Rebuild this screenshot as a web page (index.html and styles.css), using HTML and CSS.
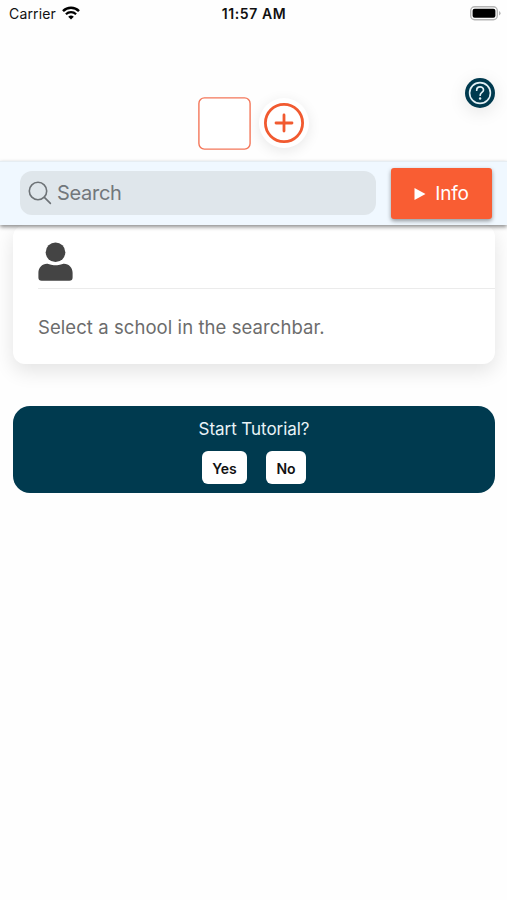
FILE: index.html
```
<!DOCTYPE html>
<html lang="en">
<head>
    <meta charset="UTF-8">
    <meta name="viewport" content="width=device-width, initial-scale=1.0">
    <title>School Search</title>
    <link rel="stylesheet" href="styles.css">
</head>
<body>
    <div class="status-bar">
        <div class="carrier">
            <span>Carrier</span>
            <svg class="wifi" width="18" height="14" viewBox="0 0 18 14">
                <path d="M1 5.1a11.500 11.500 0 0 1 16 0" fill="none" stroke="#000" stroke-width="2.5"/>
                <path d="M3.900 8.200a7.300 7.300 0 0 1 10.200 0" fill="none" stroke="#000" stroke-width="2.2"/>
                <path d="M9 13.600L6.200 10.800a4 4 0 0 1 5.600 0z" fill="#000"/>
            </svg>
        </div>
        <div class="time">11:57 AM</div>
        <svg class="battery" width="31" height="15" viewBox="0 0 31 15">
            <rect x="0.7" y="0.7" width="26.6" height="13" rx="4" fill="#fff" stroke="#b5b5b5" stroke-width="1.4"/>
            <rect x="2.6" y="2.7" width="22.8" height="9" rx="2" fill="#000"/>
            <path d="M29 5v4.6q1.6-.8 1.6-2.3T29 5z" fill="#b5b5b5"/>
        </svg>
    </div>

    <header class="header">
        <svg class="tab" width="53" height="53" viewBox="0 0 53 53">
            <rect x="0.9" y="0.9" width="51.2" height="51.2" rx="5.5" fill="#fff" stroke="#f4775a" stroke-width="1.4"/>
        </svg>
        <button class="add-btn" aria-label="Add">
            <svg width="40" height="40" viewBox="0 0 40 40" fill="none" stroke="#f15a30">
                <circle cx="20" cy="20" r="18.6" stroke-width="2.8"/>
                <path d="M20 12v16M12 20h16" stroke-width="2.8" stroke-linecap="round"/>
            </svg>
        </button>
        <button class="help-btn" aria-label="Help">
            <svg width="30" height="30" viewBox="0 0 30 30" fill="none" stroke="#e4f1f6">
                <circle cx="15" cy="15" r="15" fill="#003a4f" stroke="none"/>
                <circle cx="15" cy="15" r="10.4" stroke-width="1.6"/>
                <path d="M11.700 12.200c0-4.500 6.800-4.300 6.800-.300 0 2.500-3.300 2.600-3.300 5.300" stroke-width="1.7" stroke-linecap="round"/>
                <circle cx="15.1" cy="20.5" r="1.2" fill="#e4f1f6" stroke="none"/>
            </svg>
        </button>
    </header>

    <section class="toolbar">
        <div class="search">
            <svg width="24" height="24" viewBox="0 0 24 24" fill="none" stroke="#6d7276" stroke-width="1.6" stroke-linecap="round">
                <circle cx="10" cy="10" r="8.7"/>
                <path d="M16.4 16.4l6 6"/>
            </svg>
            <span>Search</span>
        </div>
        <button class="info-btn">
            <svg width="12" height="12" viewBox="0 0 12 12"><path d="M.5 0L11.5 6 .5 12z" fill="#fff"/></svg>
            <span>Info</span>
        </button>
    </section>

    <section class="card">
        <div class="card-header">
            <svg width="35" height="40" viewBox="0 0 35 40" fill="#444">
                <circle cx="17.5" cy="10.2" r="9.8"/>
                <path d="M9 21.8c1.8 0 3.7 1.5 8.500 1.500s6.700-1.500 8.500-1.500c5 0 8.600 4 8.600 9v4.700q0 3.300-3.300 3.300H3.700Q.4 38.800 .4 35.500v-4.700c0-5 3.600-9 8.600-9z"/>
            </svg>
        </div>
        <p class="card-text">Select a school in the searchbar.</p>
    </section>

    <section class="tutorial">
        <p class="tutorial-title">Start Tutorial?</p>
        <div class="tutorial-buttons">
            <button class="yes-btn">Yes</button>
            <button class="no-btn">No</button>
        </div>
    </section>
</body>
</html>
```

FILE: styles.css
```
body {
    font-family: Inter, "Liberation Sans", sans-serif;
    margin: 0;
    background-color: #fefefe;
    overflow: hidden;
}
button {
    font-family: inherit;
    border: none;
    padding: 0;
    box-sizing: border-box;
}
svg {
    display: block;
    flex: none;
}
.status-bar {
    display: grid;
    grid-template-columns: 1fr auto 1fr;
    align-items: center;
    height: 27px;
    padding: 0 6px 0 9px;
    font-size: 14px;
    color: #111;
}
.carrier {
    display: flex;
    align-items: center;
    gap: 6px;
    letter-spacing: 0.15px;
}
.wifi {
    margin-top: -2px;
}
.time {
    margin-right: 2px;
    font-weight: 600;
    letter-spacing: 0.6px;
}
.battery {
    justify-self: end;
}
.header {
    position: relative;
    display: flex;
    justify-content: center;
    align-items: flex-start;
    gap: 8px;
    height: 134px;
    padding-top: 70px;
    box-sizing: border-box;
}
.add-btn {
    width: 50px;
    height: 50px;
    margin-top: 1px;
    padding: 5px;
    border-radius: 50%;
    background-color: #fff;
    box-shadow: 0 3px 14px rgba(0, 0, 0, 0.09);
}
.help-btn {
    position: absolute;
    top: 51px;
    right: 12px;
    width: 30px;
    height: 30px;
    border-radius: 50%;
    background-color: #fff;
    box-shadow: 0 4px 18px rgba(0, 0, 0, 0.1);
}
.toolbar {
    position: relative;
    z-index: 1;
    display: flex;
    align-items: center;
    gap: 15px;
    height: 64px;
    padding: 0 15px 0 20px;
    box-sizing: border-box;
    background-color: #f0f8ff;
    border-top: 1px solid #e6edf2;
    box-shadow: 0 2px 4px rgba(0, 0, 0, 0.45);
}
.search {
    flex: 1;
    display: flex;
    align-items: center;
    gap: 5px;
    height: 44px;
    margin-bottom: 2px;
    padding-left: 8px;
    border-radius: 12px;
    background-color: #dfe6eb;
    color: #72777b;
    font-size: 20px;
    letter-spacing: -0.3px;
}
.info-btn {
    display: flex;
    align-items: center;
    justify-content: center;
    gap: 9px;
    width: 101px;
    height: 51px;
    border-radius: 3px;
    background-color: #f95d33;
    color: #fff;
    font-size: 19px;
    letter-spacing: -0.2px;
    box-shadow: 0 2px 4px rgba(0, 0, 0, 0.4);
}
.card {
    height: 139px;
    margin: 0 12px 0 13px;
    padding-left: 25px;
    border-radius: 12px;
    background-color: #fff;
    box-shadow: 0 7px 20px rgba(0, 0, 0, 0.11);
}
.card-header {
    height: 64px;
    padding-top: 17px;
    box-sizing: border-box;
    border-bottom: 1px solid #ebebeb;
}
.card-text {
    margin: 26px 0 0;
    font-size: 18.5px;
    line-height: 24px;
    letter-spacing: 0.07px;
    color: #6c6c6c;
}
.tutorial {
    display: flex;
    flex-direction: column;
    align-items: center;
    height: 87px;
    margin: 42px 12px 0 13px;
    border-radius: 17px;
    background-color: #003a4f;
}
.tutorial-title {
    margin: 13px 0 12px;
    font-size: 17px;
    line-height: 20px;
    letter-spacing: -0.05px;
    color: #e9f3f7;
}
.tutorial-buttons {
    display: flex;
    gap: 19px;
}
.yes-btn,
.no-btn {
    height: 33px;
    padding-top: 1px;
    border-radius: 6px;
    background-color: #fff;
    color: #111;
    font-size: 14px;
    font-weight: 600;
}
.yes-btn {
    width: 45px;
}
.no-btn {
    width: 40px;
}
```
